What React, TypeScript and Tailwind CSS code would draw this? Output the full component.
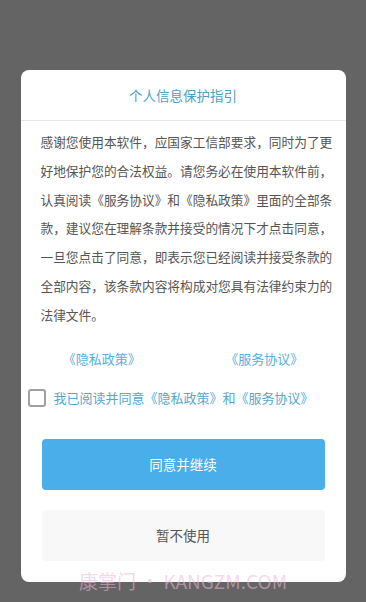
import React, { useState } from 'react';

export default function App() {
  const [agreed, setAgreed] = useState(false);

  return (
    <div
      className="relative min-h-screen w-full bg-[#646464] flex justify-center pt-[70px] overflow-hidden"
      style={{ fontFamily: '"Noto Sans CJK SC", "Noto Sans", sans-serif' }}
    >
      {/* Dialog */}
      <div className="w-[325px] h-[512px] bg-white rounded-lg flex flex-col">
        {/* Title */}
        <div className="h-[51px] flex items-center justify-center border-b border-[#e6e6e6]">
          <h1 className="text-[13.5px] text-[#4e9fc2]">个人信息保护指引</h1>
        </div>

        {/* Body */}
        <p className="pl-5 pr-3 pt-[7px] text-[12.7px] leading-[28.8px] text-[#555555]">
          感谢您使用本软件，应国家工信部要求，同时为了更好地保护您的合法权益。请您务必在使用本软件前，认真阅读《服务协议》和《隐私政策》里面的全部条款，建议您在理解条款并接受的情况下才点击同意，一旦您点击了同意，即表示您已经阅读并接受条款的全部内容，该条款内容将构成对您具有法律约束力的法律文件。
        </p>

        {/* Links */}
        <div className="grid grid-cols-2 mt-[19px] text-[13px] text-[#5aaedb]">
          <span className="text-center">《隐私政策》</span>
          <span className="text-center">《服务协议》</span>
        </div>

        {/* Agreement checkbox */}
        <label className="flex items-center mt-[20px] pl-[7px] cursor-pointer">
          <span
            onClick={() => setAgreed(!agreed)}
            className="w-[18px] h-[18px] border-2 border-[#a0a0a0] rounded-[3px] flex items-center justify-center"
          >
            {agreed && <span className="w-[8px] h-[8px] bg-[#4aaeea] rounded-[1px]" />}
          </span>
          <span className="ml-[8px] text-[13px] text-[#55a8d2]">
            我已阅读并同意《隐私政策》和《服务协议》
          </span>
        </label>

        {/* Buttons */}
        <div className="flex flex-col gap-[20px] px-[21px] mt-[31px]">
          <button className="h-[51px] rounded bg-[#4aaeea] text-white text-[13.5px]">
            同意并继续
          </button>
          <button className="h-[51px] rounded bg-[#f8f8f8] text-[#555555] text-[13.5px]">
            暂不使用
          </button>
        </div>
      </div>

      {/* Watermark */}
      <div className="absolute left-0 right-0 top-[567px] text-center text-[19px] text-[rgba(235,185,215,0.55)] pointer-events-none">
        康掌门 · KANGZM.COM
      </div>
    </div>
  );
}
